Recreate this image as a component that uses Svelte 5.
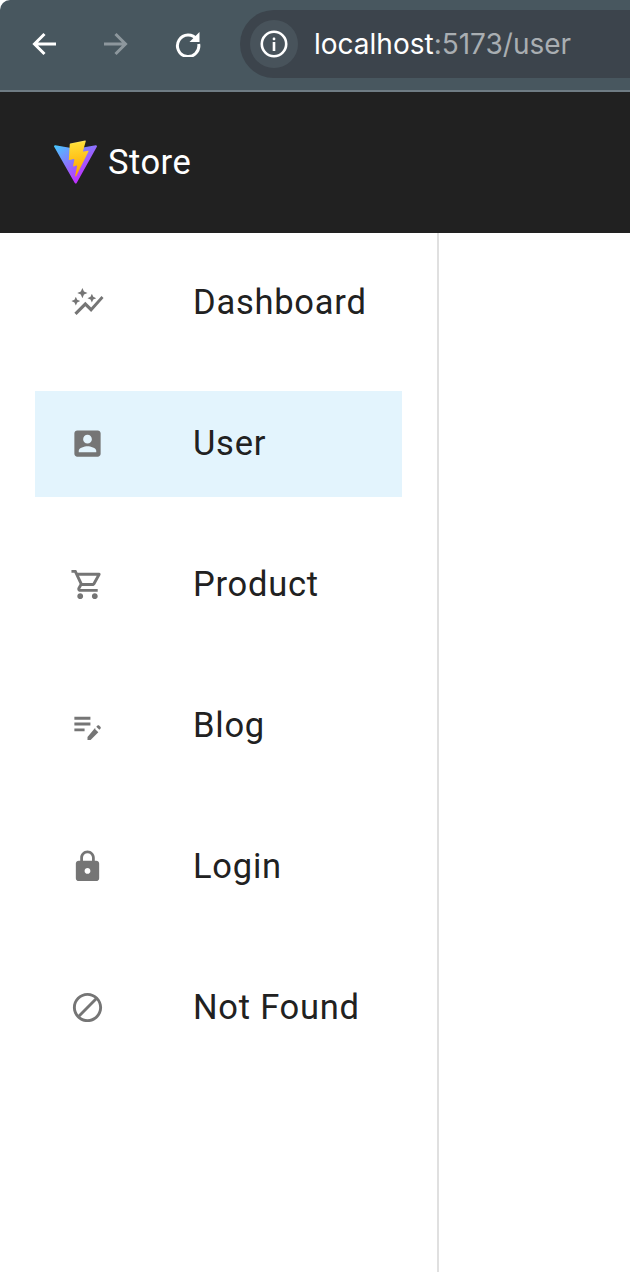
<script>
  const items = [
    { label: 'Dashboard', d: 'M14.06 9.94 12 9l2.06-.94L15 6l.94 2.06L18 9l-2.06.94L15 12zM4 14l.94-2.06L7 11l-2.06-.94L4 8l-.94 2.06L1 11l2.06.94zm4.5-5 1.09-2.41L12 5.5l-2.41-1.09L8.5 2 7.41 4.41 5 5.5l2.41 1.09zm-4 11.5 6-6.01 4 4L23 8.93l-1.41-1.41-7.09 7.97-4-4L3 18.99z' },
    { label: 'User', active: true, d: 'M3 5v14c0 1.1.89 2 2 2h14c1.1 0 2-.9 2-2V5c0-1.1-.9-2-2-2H5c-1.11 0-2 .9-2 2zm12 4c0 1.66-1.34 3-3 3s-3-1.34-3-3 1.34-3 3-3 3 1.34 3 3zm-9 8c0-2 4-3.1 6-3.1s6 1.1 6 3.1v1H6v-1z' },
    { label: 'Product', d: 'M15.55 13c.75 0 1.41-.41 1.75-1.03l3.58-6.49c.37-.66-.11-1.48-.87-1.48H5.21l-.94-2H1v2h2l3.6 7.59-1.35 2.44C4.52 15.37 5.48 17 7 17h12v-2H7l1.1-2h7.45zM6.16 6h12.15l-2.76 5H8.53L6.16 6zM7 18c-1.1 0-1.99.9-1.99 2S5.9 22 7 22s2-.9 2-2-.9-2-2-2zm10 0c-1.1 0-1.99.9-1.99 2s.89 2 1.99 2 2-.9 2-2-.9-2-2-2z' },
    { label: 'Blog', d: 'M3 10h11v2H3v-2zm0-2h11V6H3v2zm0 8h7v-2H3v2zm15.010-3.130.710-.710c.390-.390 1.020-.390 1.410 0l.710.710c.390.390.390 1.020 0 1.410l-.710.710-2.120-2.120zm-.710.710L12 19.880V22h2.120l5.300-5.300-2.120-2.120z' },
    { label: 'Login', d: 'M18 8h-1V6c0-2.76-2.24-5-5-5S7 3.24 7 6v2H6c-1.1 0-2 .9-2 2v10c0 1.1.9 2 2 2h12c1.1 0 2-.9 2-2V10c0-1.1-.9-2-2-2zm-6 9c-1.1 0-2-.9-2-2s.9-2 2-2 2 .9 2 2-.9 2-2 2zm3.1-9H8.9V6c0-1.71 1.39-3.1 3.1-3.1 1.71 0 3.1 1.39 3.1 3.1v2z' },
    { label: 'Not Found', d: 'M12 2C6.48 2 2 6.48 2 12s4.48 10 10 10 10-4.48 10-10S17.52 2 12 2zM4 12c0-4.42 3.58-8 8-8 1.85 0 3.55.63 4.9 1.69L5.69 16.9C4.63 15.55 4 13.85 4 12zm8 8c-1.85 0-3.55-.63-4.9-1.69L18.31 7.1C19.37 8.45 20 10.15 20 12c0 4.42-3.58 8-8 8z' }
  ];
</script>

<div class="page">
  <div class="chrome">
    <svg class="nav" viewBox="0 0 24 24"><path d="M24 12H3M12.500 2 2.500 12l10 10" /></svg>
    <svg class="nav off" viewBox="0 0 24 24"><path d="M0 12h21M11.500 2 21.500 12 11.500 22" /></svg>
    <svg class="nav reload" viewBox="0 0 26 26"><path d="M21.800 8.500A10.700 10.700 0 1 0 23.700 13" /><path class="tip" d="M24.500 1v10h-10z" /></svg>
    <div class="url">
      <div class="info">
        <svg viewBox="0 0 28 28"><circle class="ring" cx="14" cy="14" r="12.200" /><rect class="dot" x="12.700" y="7.500" width="2.600" height="2.800" rx="1" /><rect class="dot" x="12.700" y="12" width="2.600" height="9" /></svg>
      </div>
      <span class="host">localhost<span class="rest">:5173/user</span></span>
    </div>
  </div>

  <header class="bar">
    <svg class="logo" viewBox="0 0 410 404">
      <defs>
        <linearGradient id="vg0" x1="6" y1="33" x2="235" y2="344" gradientUnits="userSpaceOnUse"><stop stop-color="#41D1FF" /><stop offset="1" stop-color="#BD34FE" /></linearGradient>
        <linearGradient id="vg1" x1="194.651" y1="8.818" x2="236.076" y2="292.989" gradientUnits="userSpaceOnUse"><stop stop-color="#FFEA83" /><stop offset="0.083" stop-color="#FFDD35" /><stop offset="1" stop-color="#FFA800" /></linearGradient>
      </defs>
      <path fill="url(#vg0)" d="M399.641 59.5246L215.643 388.545C211.844 395.338 202.084 395.378 198.228 388.618L10.5817 59.5563C6.38087 52.1896 12.6802 43.2665 21.0281 44.7586L205.223 77.6824C206.398 77.8924 207.601 77.8904 208.776 77.6763L389.119 44.8058C397.439 43.2894 403.768 52.1434 399.641 59.5246Z" />
      <path fill="url(#vg1)" d="M292.965 1.5744L156.801 28.2552C154.563 28.6937 152.906 30.5903 152.771 32.8664L144.395 174.33C144.198 177.662 147.258 180.248 150.51 179.498L188.42 170.749C191.967 169.931 195.172 173.055 194.443 176.622L183.18 231.775C182.422 235.487 185.907 238.661 189.532 237.56L212.947 230.446C216.577 229.344 220.065 232.527 219.297 236.242L201.398 322.875C200.278 328.294 207.486 331.249 210.492 326.603L212.5 323.5L323.454 102.072C325.312 98.3645 322.108 94.137 318.036 94.9228L279.014 102.454C275.347 103.161 272.227 99.746 273.262 96.1583L298.731 7.86689C299.767 4.27314 296.636 0.855181 292.965 1.5744Z" />
    </svg>
    <span class="brand">Store</span>
  </header>

  <div class="body">
    <nav class="side">
      {#each items as item}
        <div class="item" class:active={item.active}>
          <svg class="icon" viewBox="0 0 24 24"><path d={item.d} /></svg>
          <span class="label">{item.label}</span>
        </div>
      {/each}
    </nav>
  </div>
</div>

<style>
  :global(body) {
    margin: 0;
    background: #fff;
  }
  .page {
    width: 630px;
    height: 1272px;
    display: flex;
    flex-direction: column;
    overflow: hidden;
    font-family: Roboto, sans-serif;
  }
  .chrome {
    flex: none;
    box-sizing: border-box;
    display: flex;
    align-items: center;
    padding: 0 0 2px 32px;
    background: #48575f;
    border-bottom: 2px solid #6f7c84;
    height: 92px;
    border-top-left-radius: 10px;
  }
  .nav {
    width: 24px;
    height: 24px;
    margin-right: 48px;
    flex: none;
  }
  .nav path {
    fill: none;
    stroke: #fff;
    stroke-width: 3;
  }
  .nav.off path {
    stroke: #8d979d;
  }
  .nav.reload {
    width: 26px;
    height: 26px;
    margin-left: -1px;
    margin-right: 39px;
  }
  .nav.reload .tip {
    fill: #fff;
    stroke: none;
  }
  .url {
    flex: 1;
    height: 68px;
    margin-right: -40px;
    display: flex;
    align-items: center;
    padding-left: 10px;
    border-radius: 34px;
    background: #3c444c;
  }
  .info {
    width: 48px;
    height: 48px;
    border-radius: 50%;
    background: #48535b;
    display: flex;
    align-items: center;
    justify-content: center;
    flex: none;
  }
  .info svg {
    width: 28px;
    height: 28px;
  }
  .ring {
    fill: none;
    stroke: #fff;
    stroke-width: 2.6;
  }
  .dot {
    fill: #fff;
  }
  .host {
    margin-left: 16px;
    font-family: Inter, sans-serif;
    font-size: 28px;
    color: #fff;
    white-space: nowrap;
  }
  .rest {
    color: #a9aeb2;
  }
  .bar {
    height: 141px;
    flex: none;
    display: flex;
    align-items: center;
    padding-left: 53px;
    background: #212121;
    color: #fff;
  }
  .logo {
    width: 45px;
    height: 45px;
    margin-right: 10px;
    flex: none;
  }
  .brand {
    font-size: 34.5px;
    letter-spacing: 0.5px;
    margin-top: -2px;
  }
  .body {
    flex: 1;
    display: flex;
  }
  .side {
    width: 437px;
    border-right: 2px solid #e0e0e0;
    padding-top: 17px;
    display: flex;
    flex-direction: column;
    gap: 35px;
  }
  .item {
    height: 106px;
    margin: 0 35px;
    display: flex;
    align-items: center;
    color: #212121;
  }
  .item.active {
    background: #e3f4fd;
  }
  .icon {
    width: 35px;
    height: 35px;
    margin-left: 35px;
    margin-right: 89px;
    margin-top: -1px;
    flex: none;
    fill: #757575;
  }
  .label {
    font-size: 34.5px;
    letter-spacing: 0.75px;
    margin-top: -3px;
    margin-left: -1px;
  }
</style>
